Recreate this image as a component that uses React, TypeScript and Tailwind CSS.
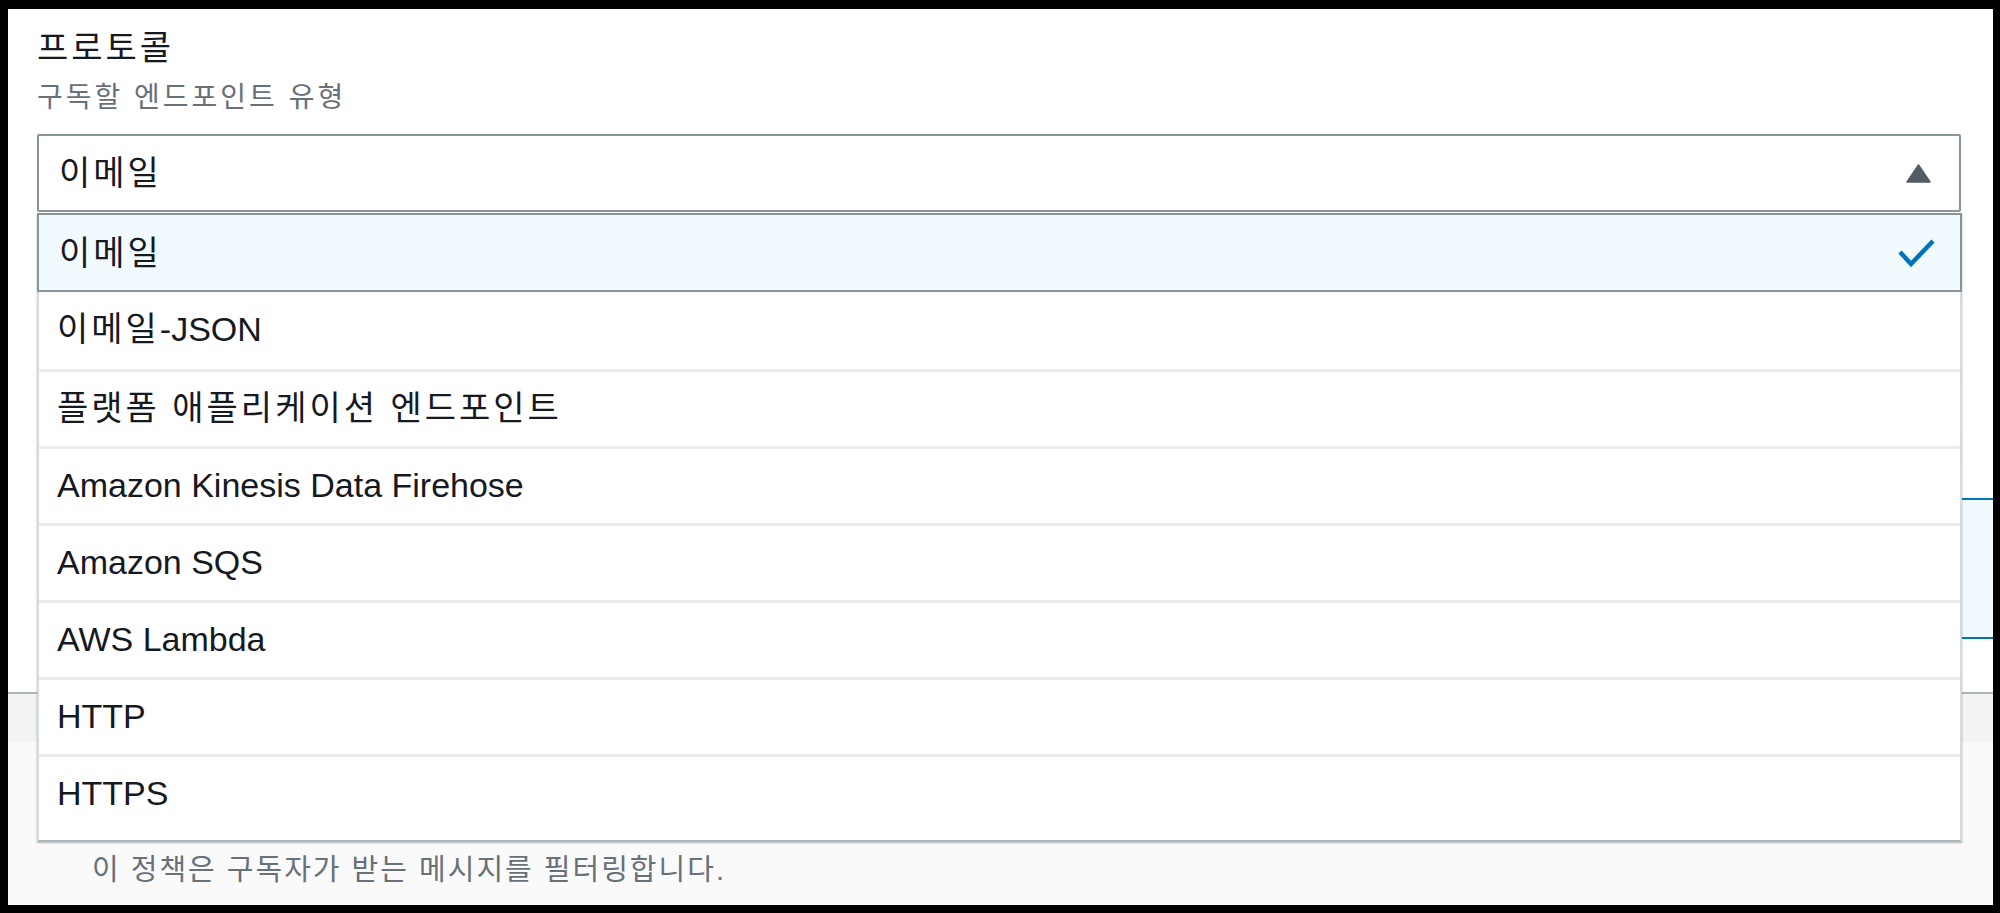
import React from "react";

const options = [
  "이메일",
  "이메일-JSON",
  "플랫폼 애플리케이션 엔드포인트",
  "Amazon Kinesis Data Firehose",
  "Amazon SQS",
  "AWS Lambda",
  "HTTP",
  "HTTPS",
];

// korean runs get a bit of extra tracking so they match the original's wider hangul
function Ko({ text, track }: { text: string; track: string }) {
  const parts = text.split(/([\uAC00-\uD7A3][\uAC00-\uD7A3 ]*)/).filter(Boolean);
  return (
    <>
      {parts.map((p, i) =>
        /[\uAC00-\uD7A3]/.test(p) ? (
          <span key={i} className={track}>
            {p}
          </span>
        ) : (
          <span key={i}>{p}</span>
        )
      )}
    </>
  );
}

function Caret() {
  return (
    <svg width="25" height="19" viewBox="0 0 25 19">
      <path d="M12.5 1 L24 18 L1 18 Z" fill="#545b64" stroke="#545b64" strokeWidth="1.5" strokeLinejoin="round" />
    </svg>
  );
}

function Check() {
  return (
    <svg width="38" height="30" viewBox="0 0 38 30">
      <polyline points="2,14 13,26 35,3" fill="none" stroke="#0073bb" strokeWidth="4.5" />
    </svg>
  );
}

export default function App() {
  const selected = "이메일";

  return (
    <div className="w-[2000px] h-[913px] bg-black pt-[9px] pl-[8px] pr-[7px] pb-[8px] font-['Liberation_Sans','Noto_Sans_CJK_KR',sans-serif]">
      <div className="h-full w-full bg-white flex flex-col overflow-hidden">
        {/* field */}
        <div className="pl-[29px] pr-[32px] pt-[19px]">
          <div className="text-[34px] leading-[40px] text-[#16191f]">
            <Ko text="프로토콜" track="tracking-[3px]" />
          </div>
          <div className="mt-[13px] text-[28px] leading-[34px] text-[#687078]">
            <Ko text="구독할 엔드포인트 유형" track="tracking-[3px]" />
          </div>

          <div className="relative mt-[19px]">
            <div className="h-[78px] border-2 border-[#879596] rounded-[2px] flex items-center justify-between pl-[20px] pr-[28px]">
              <span className="text-[34px] leading-[40px] text-[#16191f]">
                <Ko text={selected} track="tracking-[3px]" />
              </span>
              <Caret />
            </div>

            <ul className="absolute left-0 right-[-1px] top-[79px] z-10 bg-white border-x-2 border-b-2 border-[#d5dbdb] border-b-[#aab7b8] pb-[9px] shadow-[0_1px_2px_rgba(0,28,36,0.3)]">
              {options.map((o, i) => {
                if (o === selected) {
                  return (
                    <li
                      key={o}
                      className="-mx-[2px] h-[79px] border-2 border-[#879596] bg-[#f1faff] flex items-center justify-between pl-[20px] pr-[24px]"
                    >
                      <span className="text-[34px] leading-[40px] text-[#16191f]">
                        <Ko text={o} track="tracking-[3px]" />
                      </span>
                      <Check />
                    </li>
                  );
                }
                return (
                  <li
                    key={o}
                    className={
                      i === 1
                        ? "h-[77px] flex items-center pl-[18px] pb-[3px]"
                        : "h-[77px] flex items-center pl-[18px] pb-[3px] border-t-[3px] border-[#eaeded]"
                    }
                  >
                    <span className="text-[34px] leading-[40px] text-[#16191f]">
                      <Ko text={o} track="tracking-[3px]" />
                    </span>
                  </li>
                );
              })}
            </ul>
          </div>
        </div>

        {/* content under the open menu */}
        <div className="mt-[286px] flex justify-end">
          <div className="w-[700px] h-[141px] border-y-2 border-l-2 border-[#0073bb] bg-[#f1faff]" />
        </div>

        <div className="mt-[53px] flex-1 flex flex-col">
          <div className="h-[50px] border-t-2 border-[#aab7b8] bg-[#f2f3f3]" />
          <div className="flex-1 bg-[#fafafa] pl-[84px] pt-[110px]">
            <div className="text-[29px] leading-[36px] text-[#687078]">
              <Ko text="이 정책은 구독자가 받는 메시지를 필터링합니다." track="tracking-[2px]" />
            </div>
          </div>
        </div>
      </div>
    </div>
  );
}
